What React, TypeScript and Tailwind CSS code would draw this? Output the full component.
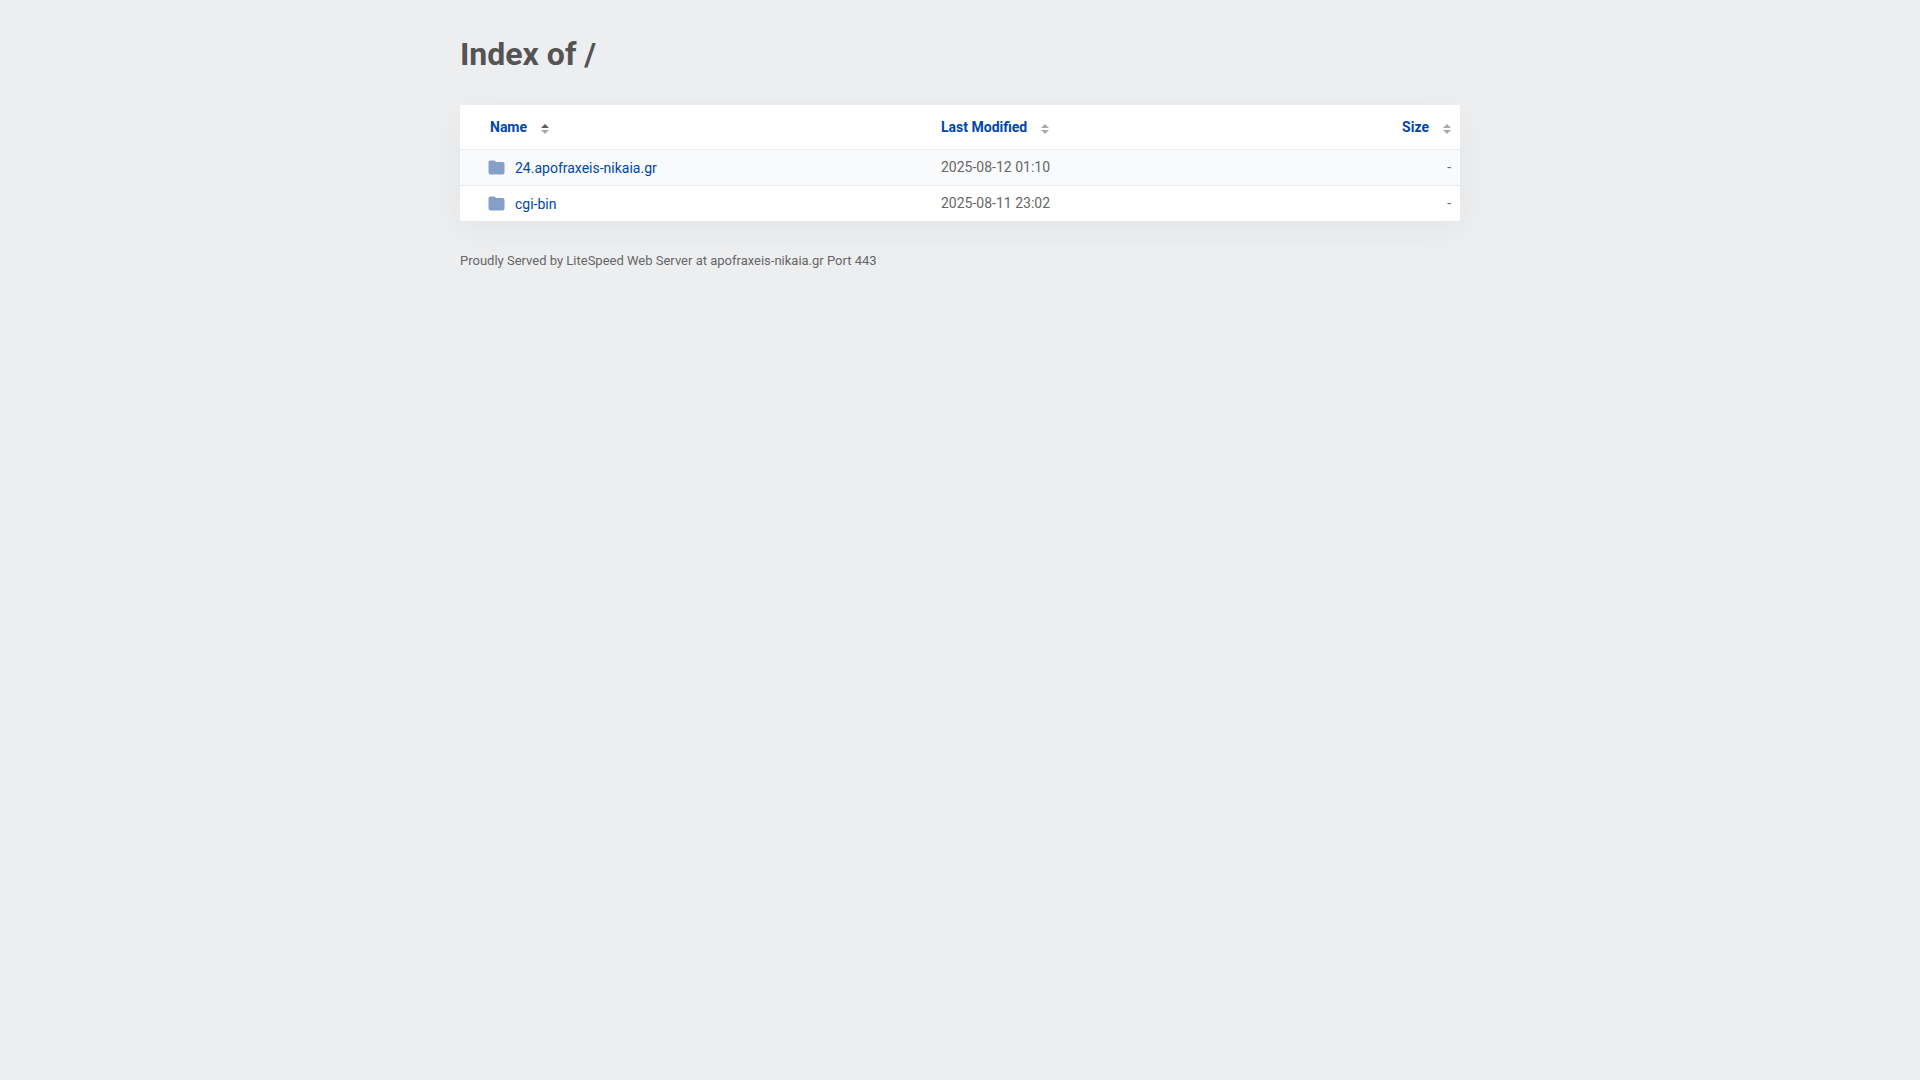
import React from "react";

const entries = [
  { name: "24.apofraxeis-nikaia.gr", modified: "2025-08-12 01:10", size: "-" },
  { name: "cgi-bin", modified: "2025-08-11 23:02", size: "-" },
];

function Folder() {
  return (
    <svg viewBox="0 0 17 15" className="h-[15px] w-[17px] shrink-0" aria-hidden="true">
      <path d="M2.500.5h3.700q.8 0 1.200.7l.5.8h6.600a2 2 0 0 1 2 2v8.500a2 2 0 0 1-2 2h-12a2 2 0 0 1-2-2v-10a2 2 0 0 1 2-2z" fill="#859fc6" />
    </svg>
  );
}

function SortIcon({ active = false }: { active?: boolean }) {
  return (
    <svg viewBox="0 0 8 10" className="mt-1 h-[10px] w-2" aria-hidden="true">
      <path d="M4 0l4 4H0z" fill={active ? "#5c5c5c" : "#aaaaaa"} />
      <path d="M0 6h8l-4 4z" fill="#aaaaaa" />
    </svg>
  );
}

function SortButton({ label, active = false }: { label: string; active?: boolean }) {
  return (
    <button type="button" className="inline-flex cursor-pointer items-center gap-[14px] font-bold text-[#0047ab]">
      {label}
      <SortIcon active={active} />
    </button>
  );
}

export default function App() {
  return (
    <main className="min-h-screen bg-[#edeef0] px-5 pt-8 font-['Roboto',sans-serif] text-sm text-[#545454]">
      <div className="mx-auto max-w-[1000px]">
        <h1 className="text-[32px] leading-[44px] font-bold">Index of /</h1>
        <table className="mt-[29px] w-full table-fixed border-collapse bg-white text-left shadow-[0_8px_30px_rgba(0,50,50,0.05)]">
          <thead>
            <tr className="h-11">
              <th className="w-[47%] pl-[30px]"><SortButton label="Name" active /></th>
              <th className="pl-[11px]"><SortButton label="Last Modified" /></th>
              <th className="w-[20%] pr-[9px] text-right"><SortButton label="Size" /></th>
            </tr>
          </thead>
          <tbody>
            {entries.map((entry) => (
              <tr key={entry.name} className="h-9 border-t border-[#e9ecef] odd:bg-[#f9fafc]">
                <td className="pt-px pl-7">
                  <a href="#" className="flex items-center gap-[10px] text-[#0047ab]"><Folder />{entry.name}</a>
                </td>
                <td className="pl-[11px] text-[#666666]">{entry.modified}</td>
                <td className="pr-[9px] text-right text-[#666666]">{entry.size}</td>
              </tr>
            ))}
          </tbody>
        </table>
        <footer className="mt-[30px] text-[13px] leading-5 text-[#666666]">Proudly Served by LiteSpeed Web Server at apofraxeis-nikaia.gr Port 443</footer>
      </div>
    </main>
  );
}
